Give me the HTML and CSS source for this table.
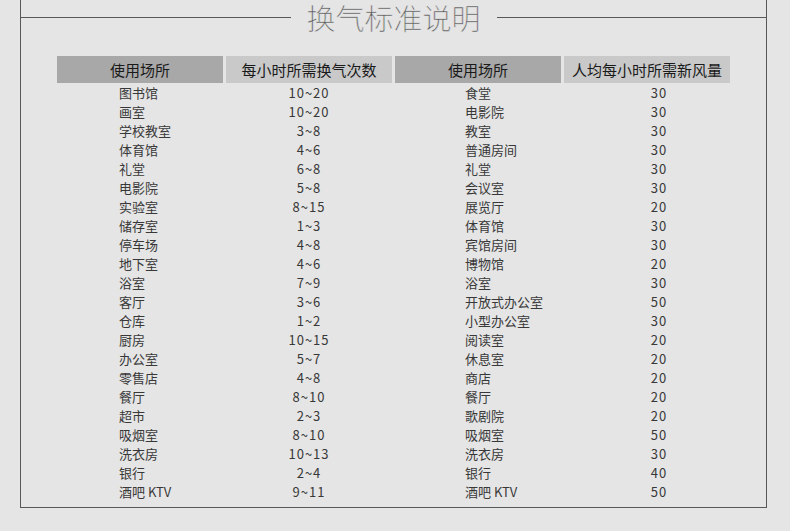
FILE: index.html
```html
<!DOCTYPE html>
<html lang="zh">
<head>
<meta charset="utf-8">
<link rel="stylesheet" href="styles.css">
</head>
<body>
<div class="frame">
  <div class="legend">
    <span class="rule"></span>
    <h1 class="title">换气标准说明</h1>
    <span class="rule"></span>
  </div>
  <div class="tbl">
    <div class="th dark">使用场所</div><div class="th light">每小时所需换气次数</div><div class="th dark">使用场所</div><div class="th light">人均每小时所需新风量</div>

    <div class="name l">图书馆</div><div class="num">10~20</div><div class="name r">食堂</div><div class="num r">30</div>
    <div class="name l">画室</div><div class="num">10~20</div><div class="name r">电影院</div><div class="num r">30</div>
    <div class="name l">学校教室</div><div class="num">3~8</div><div class="name r">教室</div><div class="num r">30</div>
    <div class="name l">体育馆</div><div class="num">4~6</div><div class="name r">普通房间</div><div class="num r">30</div>
    <div class="name l">礼堂</div><div class="num">6~8</div><div class="name r">礼堂</div><div class="num r">30</div>
    <div class="name l">电影院</div><div class="num">5~8</div><div class="name r">会议室</div><div class="num r">30</div>
    <div class="name l">实验室</div><div class="num">8~15</div><div class="name r">展览厅</div><div class="num r">20</div>
    <div class="name l">储存室</div><div class="num">1~3</div><div class="name r">体育馆</div><div class="num r">30</div>
    <div class="name l">停车场</div><div class="num">4~8</div><div class="name r">宾馆房间</div><div class="num r">30</div>
    <div class="name l">地下室</div><div class="num">4~6</div><div class="name r">博物馆</div><div class="num r">20</div>
    <div class="name l">浴室</div><div class="num">7~9</div><div class="name r">浴室</div><div class="num r">30</div>
    <div class="name l">客厅</div><div class="num">3~6</div><div class="name r">开放式办公室</div><div class="num r">50</div>
    <div class="name l">仓库</div><div class="num">1~2</div><div class="name r">小型办公室</div><div class="num r">30</div>
    <div class="name l">厨房</div><div class="num">10~15</div><div class="name r">阅读室</div><div class="num r">20</div>
    <div class="name l">办公室</div><div class="num">5~7</div><div class="name r">休息室</div><div class="num r">20</div>
    <div class="name l">零售店</div><div class="num">4~8</div><div class="name r">商店</div><div class="num r">20</div>
    <div class="name l">餐厅</div><div class="num">8~10</div><div class="name r">餐厅</div><div class="num r">20</div>
    <div class="name l">超市</div><div class="num">2~3</div><div class="name r">歌剧院</div><div class="num r">20</div>
    <div class="name l">吸烟室</div><div class="num">8~10</div><div class="name r">吸烟室</div><div class="num r">50</div>
    <div class="name l">洗衣房</div><div class="num">10~13</div><div class="name r">洗衣房</div><div class="num r">30</div>
    <div class="name l">银行</div><div class="num">2~4</div><div class="name r">银行</div><div class="num r">40</div>
    <div class="name l">酒吧 KTV</div><div class="num">9~11</div><div class="name r">酒吧 KTV</div><div class="num r">50</div>
  </div>
</div>
</body>
</html>
```

FILE: styles.css
```css
html, body {
  margin: 0;
  padding: 0;
  background: #e5e5e5;
}
body {
  width: 790px;
  height: 531px;
  overflow: hidden;
  font-family: "Noto Sans CJK SC", "Noto Sans", sans-serif;
}
.frame {
  margin: 17px 0 0 20px;
  width: 745px;
  height: 507px;
  border-left: 1px solid #585858;
  border-right: 1px solid #585858;
  border-bottom: 1px solid #585858;
}
.legend {
  display: flex;
  align-items: center;
  height: 34px;
  margin-top: -17px;
}
.rule {
  flex: 1;
  height: 0;
  border-top: 1px solid #585858;
  margin-top: 1px;
}
.title {
  margin: 0 16px;
  font-family: "Noto Sans CJK SC Light", "Noto Sans CJK SC DemiLight", "Noto Sans CJK SC", sans-serif;
  font-size: 29px;
  line-height: 34px;
  font-weight: 300;
  color: #555555;
  -webkit-text-stroke: 0.5px #e5e5e5;
}
.tbl {
  display: grid;
  grid-template-columns: 166px 166px 166px 166px;
  column-gap: 3px;
  margin: 22px 0 0 36px;
}
.th {
  height: 27px;
  line-height: 27px;
  text-align: center;
  font-size: 15px;
  color: #1a1a1a;
}
.dark { background: #a9a8a8; }
.light { background: #c9c9c9; }
.name, .num {
  height: 19px;
  line-height: 19px;
  font-size: 13px;
  color: #383838;
  white-space: nowrap;
}
.name.l { padding-left: 62px; }
.name.r { padding-left: 70px; }
.num { text-align: center; letter-spacing: 1px; }
.num.r { padding-left: 24px; }
```
